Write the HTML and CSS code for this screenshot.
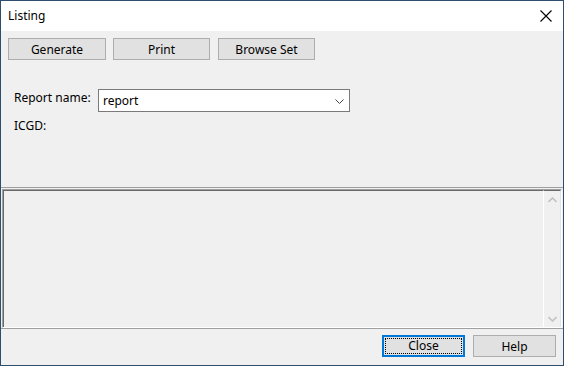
FILE: index.html
```html
<!DOCTYPE html>
<html>
<head>
<meta charset="utf-8">
<link rel="stylesheet" href="styles.css">
</head>
<body>
<div class="window">
  <div class="titlebar">
    <span class="title">Listing</span>
    <span class="close-x">
      <svg width="12" height="12" viewBox="0 0 12 12"><path d="M0.5 0.5 L11.5 11.5 M11.5 0.5 L0.5 11.5" stroke="#000" stroke-width="1.1" fill="none"/></svg>
    </span>
  </div>
  <div class="panel">
    <div class="toolbar">
      <button class="btn btn-gen">Generate</button>
      <button class="btn btn-print">Print</button>
      <button class="btn btn-browse">Browse Set</button>
    </div>
    <div class="form">
      <div class="row">
        <span class="label">Report name:</span>
        <div class="combo">
          <span class="combo-text">report</span>
          <svg class="chev" width="9" height="5" viewBox="0 0 9 5"><path d="M0.5 0.5 L4.5 4.5 L8.5 0.5" stroke="#444" stroke-width="1" fill="none"/></svg>
        </div>
      </div>
      <div class="row2"><span class="label">ICGD:</span></div>
    </div>
  </div>
  <div class="listwrap">
    <div class="listbox">
      <div class="listarea"></div>
      <div class="vscroll">
        <svg width="9" height="6" viewBox="0 0 9 6"><path d="M0.5 5 L4.5 1 L8.5 5" stroke="#c2c2c2" stroke-width="1.6" fill="none"/></svg>
        <svg width="9" height="6" viewBox="0 0 9 6"><path d="M0.5 1 L4.5 5 L8.5 1" stroke="#c2c2c2" stroke-width="1.6" fill="none"/></svg>
      </div>
    </div>
  </div>
  <div class="footer">
    <button class="btn btn-foot focused"><span class="focus-rect">Close</span></button>
    <button class="btn btn-foot">Help</button>
  </div>
</div>
</body>
</html>
```

FILE: styles.css
```css
html, body {
  margin: 0;
  padding: 0;
  background: #f0f0f0;
}
body {
  font-family: "Noto Sans", "Open Sans", sans-serif;
  font-size: 12px;
  color: #000;
}
.window {
  width: 564px;
  height: 366px;
  box-sizing: border-box;
  border: 1px solid #2f4d6c;
  background: #f0f0f0;
  display: flex;
  flex-direction: column;
}
.titlebar {
  height: 30px;
  background: #fff;
  display: flex;
  align-items: center;
  justify-content: space-between;
  padding-left: 7px;
  padding-right: 10px;
  flex: none;
}
.title {
  font-size: 12px;
  line-height: 16px;
}
.close-x {
  display: flex;
  width: 12px;
  height: 12px;
  margin-right: 1px;
}
.panel {
  height: 156px;
  border-bottom: 1px solid #a0a0a0;
  flex: none;
  display: flex;
  flex-direction: column;
}
.toolbar {
  display: flex;
  padding: 7px 0 0 7px;
}
.btn {
  font-family: inherit;
  font-size: 12px;
  height: 22px;
  background: #e1e1e1;
  border: 1px solid #adadad;
  padding: 0;
  color: #000;
  box-sizing: border-box;
}
.btn-gen { width: 98px; }
.btn-print { width: 97px; margin-left: 7px; }
.btn-browse { width: 97px; margin-left: 8px; }
.form {
  padding: 29px 0 0 13px;
}
.row {
  display: flex;
  align-items: flex-start;
}
.label {
  width: 84px;
  line-height: 16px;
  padding-top: 1px;
}
.combo {
  width: 252px;
  height: 23px;
  box-sizing: border-box;
  background: #fff;
  border: 1px solid #7a7a7a;
  display: flex;
  align-items: center;
  justify-content: space-between;
  padding: 0 5px 0 4px;
}
.combo-text {
  line-height: 16px;
}
.chev {
  margin-top: 1px;
}
.row2 {
  margin-top: 5px;
}
.listwrap {
  flex: 1;
  padding: 1px 1px 0 1px;
  border-bottom: 1px solid #a0a0a0;
  display: flex;
  flex-direction: column;
}
.listbox {
  flex: 1;
  border-top: 1px solid #a0a0a0;
  border-left: 1px solid #a0a0a0;
  border-right: 1px solid #fff;
  border-bottom: 1px solid #fff;
  display: flex;
}
.listarea {
  flex: 1;
  border-top: 1px solid #696969;
  border-left: 1px solid #696969;
}
.vscroll {
  width: 16px;
  border-top: 1px solid #696969;
  border-left: 1px solid #fff;
  border-right: 1px solid #e3e3e3;
  background: #f0f0f0;
  display: flex;
  flex-direction: column;
  justify-content: space-between;
  align-items: center;
  padding: 6px 0 5px;
}
.footer {
  height: 36px;
  box-sizing: border-box;
  flex: none;
  display: flex;
  justify-content: flex-end;
  align-items: flex-start;
  padding: 6px 7px 0 0;
  gap: 8px;
}
.btn-foot {
  width: 83px;
  height: 22px;
}
.focused {
  border: 1px solid #0078d7;
  box-shadow: inset 0 0 0 1px #0078d7;
  padding: 2px;
  display: flex;
}
.focus-rect {
  flex: 1;
  border: 1px dotted #000;
  display: flex;
  align-items: center;
  justify-content: center;
  line-height: 14px;
}
```
